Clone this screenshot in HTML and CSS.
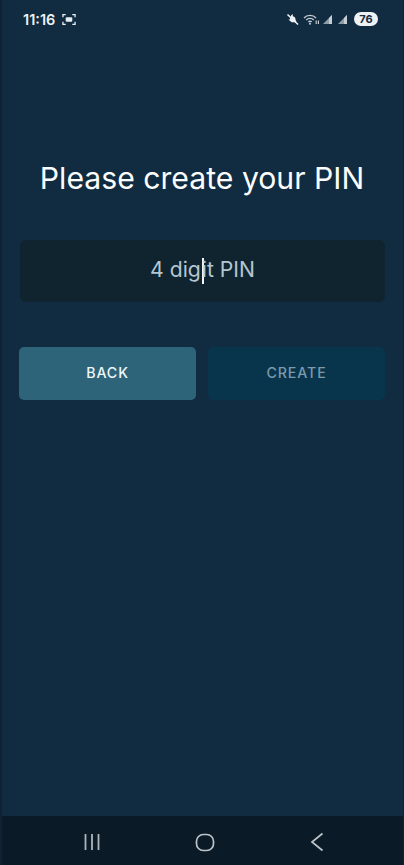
FILE: index.html
```html
<!DOCTYPE html>
<html lang="en">
<head>
<meta charset="utf-8">
<title>Create PIN</title>
<link rel="stylesheet" href="styles.css">
</head>
<body>
<div class="phone">
  <header class="status">
    <div class="status-left">
      <span class="time">11:16</span>
      <svg class="shot" width="14" height="13" viewBox="0 0 15 13" fill="none" stroke="#e8eef2" stroke-width="1.4">
        <path d="M1 4V1.2H4M11 1.2H14V4M14 9V11.8H11M4 11.8H1V9"/>
        <rect x="4" y="4.2" width="7" height="4.6" rx="1" fill="#e8eef2" stroke="none"/>
      </svg>
    </div>
    <div class="status-right">
      <svg width="13" height="13" viewBox="0 0 13 13"><path d="M1.5 1.5L12 11.5" stroke="#eef2f5" stroke-width="1.6"/><path d="M5 2.6L6.8 1V3.2C8.8 3.6 9.6 5 9.6 7L10.6 9.2H5.6L2.4 6.4H3.8Z" fill="#eef2f5"/></svg>
      <svg class="wifi" width="17" height="13" viewBox="0 0 17 13" fill="none" stroke="#c3ccd2" stroke-width="1.3"><path d="M1 5C4 1.6 10 1.6 13 5"/><path d="M3.2 7C5.2 4.8 8.8 4.8 10.8 7"/><path d="M5.4 9C6.3 8 7.7 8 8.6 9"/><circle cx="7" cy="10.8" r="1" fill="#c3ccd2" stroke="none"/><path d="M13.2 7.5V11M15.4 7.5V11" stroke-width="1.2"/></svg>
      <svg class="signal signal-first" width="11" height="11" viewBox="0 0 11 11"><path d="M10 1V10H1Z" fill="#8f9da6"/><path d="M10 1V10H7V4Z" fill="#c4ced4"/></svg>
      <svg class="signal" width="11" height="11" viewBox="0 0 11 11"><path d="M10 1V10H1Z" fill="#8f9da6"/><path d="M10 1V10H7V4Z" fill="#c4ced4"/></svg>
      <span class="battery">76</span>
    </div>
  </header>

  <main class="content">
    <h1 class="title">Please create your PIN</h1>
    <div class="pin-field">
      <span class="placeholder">4 dig<span class="caret"></span>it PIN</span>
    </div>
    <div class="actions">
      <button class="btn btn-back" type="button">BACK</button>
      <button class="btn btn-create" type="button">CREATE</button>
    </div>
  </main>

  <nav class="navbar">
    <svg width="18" height="18" viewBox="0 0 18 18" stroke="#aeb6bb" stroke-width="1.8"><path d="M2.5 1V17M9 1V17M15.5 1V17"/></svg>
    <svg class="home" width="20" height="19" viewBox="0 0 20 19" fill="none" stroke="#bcc4c9" stroke-width="1.7"><rect x="1.5" y="1.5" width="17" height="16" rx="6.8"/></svg>
    <svg width="14" height="20" viewBox="0 0 14 20" fill="none" stroke="#bcc4c9" stroke-width="1.7"><path d="M12.5 1.5L2 10L12.5 18.5"/></svg>
  </nav>
</div>
</body>
</html>
```
FILE: styles.css
```css
* { box-sizing: border-box; }
html, body { margin: 0; padding: 0; }
body { width: 404px; height: 865px; overflow: hidden; background: #112b40; font-family: Inter, "Liberation Sans", sans-serif; }
.phone { width: 404px; height: 865px; display: flex; flex-direction: column; background: #112b40; border-left: 2px solid #0f2233; border-right: 1px solid #0f2233; }
.status { height: 38px; flex: none; display: flex; justify-content: space-between; align-items: center; padding: 0 25px 0 21px; }
.status-left { display: flex; align-items: center; gap: 7px; }
.time { color: #eef2f5; font-size: 14.5px; font-weight: 600; }
.status-right { display: flex; align-items: center; gap: 2px; }
.wifi { margin-left: 2px; }
.signal { margin-left: 2px; }
.signal-first { margin-left: 0; }
.battery { margin-left: 4px; width: 24px; height: 14px; border-radius: 7px; background: #eef2f5; color: #152b3e; font-size: 11px; font-weight: 700; line-height: 14px; text-align: center; }
.content { flex: 1; display: flex; flex-direction: column; padding: 0 18px 0 17px; }
.title { margin: 122px 0 0; height: 36px; color: #fbfdfe; font-size: 30.2px; font-weight: 400; line-height: 36px; text-align: center; white-space: nowrap; }
.pin-field { margin: 44px 0 0 1px; height: 62px; background: #10242f; border-radius: 6px; display: flex; align-items: center; justify-content: center; }
.placeholder { position: relative; color: #b4c6d2; font-size: 21.2px; line-height: 26px; top: -1px; }
.caret { display: inline-block; width: 2px; height: 26px; background: #f2f6f8; vertical-align: -7px; margin: 0 -2px 0 1px; }
.actions { margin-top: 45px; display: flex; gap: 12px; }
.btn { flex: 1; height: 53px; padding: 0 0 2px; border: 0; border-radius: 5px; font-family: inherit; font-size: 14.2px; font-weight: 500; letter-spacing: 0.9px; }
.btn-back { background: #2e6479; color: #eef7fa; }
.btn-create { background: #08354b; color: #7c9aab; }
.navbar { flex: none; height: 49px; background: #0a1a26; display: flex; justify-content: space-between; align-items: center; padding: 3px 79px 0 81px; }
.home { margin-left: -1px; }
```
